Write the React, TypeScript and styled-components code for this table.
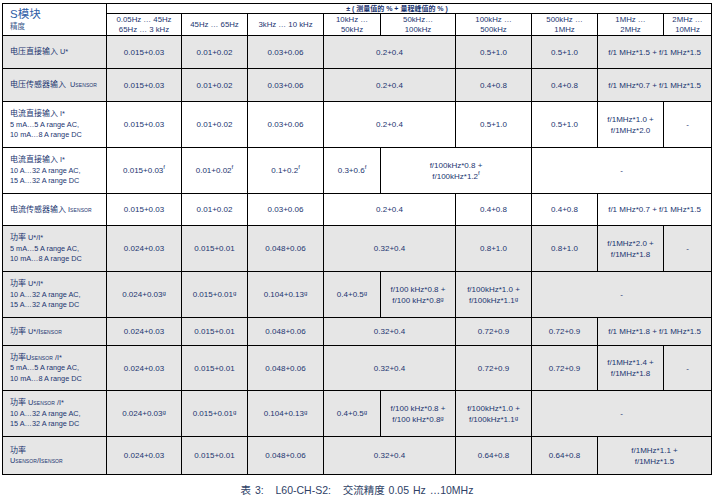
import React from "react";
import styled, { createGlobalStyle } from "styled-components";

const GlobalStyle = createGlobalStyle`
    body {
        margin: 0;
        background: #ffffff;
        font-family: "Liberation Sans", "Noto Sans CJK SC", sans-serif;
    }
`;

const ink = "#1b3570";

const Page = styled.div`
    width: 714px;
    padding: 3px 0 0 2px;
    box-sizing: border-box;
`;

const Table = styled.table`
    border-collapse: collapse;
    table-layout: fixed;
    width: 709px;
    color: ${ink};
    font-size: 8px;
    td {
        border: 1px solid #000;
        padding: 0 2px;
        text-align: center;
        vertical-align: middle;
        line-height: 11px;
        white-space: nowrap;
        overflow: hidden;
    }
`;

const Row = styled.tr<{ $h: number; $gray?: boolean }>`
    height: ${(p) => p.$h}px;
    background: ${(p) => (p.$gray ? "#e6e6e6" : "#ffffff")};
`;

const TitleCell = styled.td`
    && {
        text-align: left;
        padding-left: 7px;
        line-height: 12px;
    }
`;

const Title = styled.div`
    font-size: 11.5px;
    color: #2f5da6;
    font-family: "Liberation Sans", "Noto Sans CJK SC", sans-serif;
`;

const SubTitle = styled.div`
    font-size: 7.5px;
    color: #3b5a8c;
    font-family: "Noto Sans CJK SC", sans-serif;
`;

const RangeHead = styled.td`
    && {
        font-size: 7px;
        font-weight: bold;
        line-height: 9px;
        padding-right: 26px;
        font-family: "Liberation Sans", "Noto Sans CJK SC", sans-serif;
    }
`;

const ColHead = styled.td`
    && {
        font-size: 7.8px;
        line-height: 10px;
    }
`;

const LabelCell = styled.td`
    && {
        text-align: left;
        padding-left: 7px;
        font-size: 7.3px;
        line-height: 10.5px;
    }
`;

const Cn = styled.span`
    font-family: "Noto Sans CJK SC", sans-serif;
    font-size: 8px;
`;

const Sc = styled.span`
    font-size: 5px;
    letter-spacing: 0.1px;
`;

const Sup = styled.sup<{ $up: number }>`
    font-size: 6px;
    line-height: 0;
    vertical-align: ${(p) => p.$up}px;
`;

type Cell = { text: React.ReactNode; span?: number };
type RowData = { label: React.ReactNode; h: number; gray?: boolean; cells: Cell[] };

const cols = [104, 75, 66, 76, 57, 75, 76, 66, 66, 48];

const heads: string[][] = [
    ["0.05Hz … 45Hz", "65Hz … 3 kHz"],
    ["45Hz … 65Hz"],
    ["3kHz … 10 kHz"],
    ["10kHz …", "50kHz"],
    ["50kHz…", "100kHz"],
    ["100kHz …", "500kHz"],
    ["500kHz …", "1MHz"],
    ["1MHz …", "2MHz"],
    ["2MHz …", "10MHz"],
];

const sensor = (
    <>
        U<Sc>SENSOR</Sc>
    </>
);
const isensor = (
    <>
        I<Sc>SENSOR</Sc>
    </>
);

const f = <Sup $up={4}>f</Sup>;
const g = <Sup $up={2}>g</Sup>;

const two = (a: React.ReactNode, b: React.ReactNode) => (
    <>
        {a}
        <br />
        {b}
    </>
);

const lines = (head: React.ReactNode, ac: string, dc: string) => (
    <>
        {head}
        <br />
        {ac}
        <br />
        {dc}
    </>
);

const rowsData: RowData[] = [
    {
        label: <><Cn>电压直接输入</Cn> U*</>,
        h: 33,
        gray: true,
        cells: [
            { text: "0.015+0.03" },
            { text: "0.01+0.02" },
            { text: "0.03+0.06" },
            { text: "0.2+0.4", span: 2 },
            { text: "0.5+1.0" },
            { text: "0.5+1.0" },
            { text: "f/1 MHz*1.5 + f/1 MHz*1.5", span: 2 },
        ],
    },
    {
        label: <><Cn>电压传感器输入</Cn>&nbsp; {sensor}</>,
        h: 33,
        gray: true,
        cells: [
            { text: "0.015+0.03" },
            { text: "0.01+0.02" },
            { text: "0.03+0.06" },
            { text: "0.2+0.4", span: 2 },
            { text: "0.4+0.8" },
            { text: "0.4+0.8" },
            { text: "f/1 MHz*0.7 + f/1 MHz*1.5", span: 2 },
        ],
    },
    {
        label: lines(<><Cn>电流直接输入</Cn> I*</>, "5 mA…5 A range AC,", "10 mA…8 A range DC"),
        h: 46,
        cells: [
            { text: "0.015+0.03" },
            { text: "0.01+0.02" },
            { text: "0.03+0.06" },
            { text: "0.2+0.4", span: 2 },
            { text: "0.5+1.0" },
            { text: "0.5+1.0" },
            { text: two("f/1MHz*1.0 +", "f/1MHz*2.0") },
            { text: "-" },
        ],
    },
    {
        label: lines(<><Cn>电流直接输入</Cn> I*</>, "10 A…32 A range AC,", "15 A…32 A range DC"),
        h: 46,
        cells: [
            { text: <>0.015+0.03{f}</> },
            { text: <>0.01+0.02{f}</> },
            { text: <>0.1+0.2{f}</> },
            { text: <>0.3+0.6{f}</> },
            { text: two("f/100kHz*0.8 +", <>f/100kHz*1.2{f}</>), span: 2 },
            { text: "-", span: 3 },
        ],
    },
    {
        label: <><Cn>电流传感器输入</Cn> {isensor}</>,
        h: 32,
        cells: [
            { text: "0.015+0.03" },
            { text: "0.01+0.02" },
            { text: "0.03+0.06" },
            { text: "0.2+0.4", span: 2 },
            { text: "0.4+0.8" },
            { text: "0.4+0.8" },
            { text: "f/1 MHz*0.7 + f/1 MHz*1.5", span: 2 },
        ],
    },
    {
        label: lines(<><Cn>功率</Cn> U*/I*</>, "5 mA…5 A range AC,", "10 mA…8 A range DC"),
        h: 46,
        gray: true,
        cells: [
            { text: "0.024+0.03" },
            { text: "0.015+0.01" },
            { text: "0.048+0.06" },
            { text: "0.32+0.4", span: 2 },
            { text: "0.8+1.0" },
            { text: "0.8+1.0" },
            { text: two("f/1MHz*2.0 +", "f/1MHz*1.8") },
            { text: "-" },
        ],
    },
    {
        label: lines(<><Cn>功率</Cn> U*/I*</>, "10 A…32 A range AC,", "15 A…32 A range DC"),
        h: 46,
        gray: true,
        cells: [
            { text: <>0.024+0.03{g}</> },
            { text: <>0.015+0.01{g}</> },
            { text: <>0.104+0.13{g}</> },
            { text: <>0.4+0.5{g}</> },
            { text: two("f/100 kHz*0.8 +", <>f/100 kHz*0.8{g}</>) },
            { text: two("f/100kHz*1.0 +", <>f/100kHz*1.1{g}</>) },
            { text: "-", span: 3 },
        ],
    },
    {
        label: <><Cn>功率</Cn> U*/{isensor}</>,
        h: 28,
        gray: true,
        cells: [
            { text: "0.024+0.03" },
            { text: "0.015+0.01" },
            { text: "0.048+0.06" },
            { text: "0.32+0.4", span: 2 },
            { text: "0.72+0.9" },
            { text: "0.72+0.9" },
            { text: "f/1 MHz*1.8 + f/1 MHz*1.5", span: 2 },
        ],
    },
    {
        label: lines(<><Cn>功率</Cn>{sensor} /I*</>, "5 mA…5 A range AC,", "10 mA…8 A range DC"),
        h: 45,
        gray: true,
        cells: [
            { text: "0.024+0.03" },
            { text: "0.015+0.01" },
            { text: "0.048+0.06" },
            { text: "0.32+0.4", span: 2 },
            { text: "0.72+0.9" },
            { text: "0.72+0.9" },
            { text: two("f/1MHz*1.4 +", "f/1MHz*1.8") },
            { text: "-" },
        ],
    },
    {
        label: lines(<><Cn>功率</Cn> {sensor} /I*</>, "10 A…32 A range AC,", "15 A…32 A range DC"),
        h: 46,
        gray: true,
        cells: [
            { text: <>0.024+0.03{g}</> },
            { text: <>0.015+0.01{g}</> },
            { text: <>0.104+0.13{g}</> },
            { text: <>0.4+0.5{g}</> },
            { text: two("f/100 kHz*0.8 +", <>f/100 kHz*0.8{g}</>) },
            { text: two("f/100kHz*1.0 +", <>f/100kHz*1.1{g}</>) },
            { text: "-", span: 3 },
        ],
    },
    {
        label: (
            <>
                <Cn>功率</Cn>
                <br />
                {sensor}/{isensor}
            </>
        ),
        h: 38,
        gray: true,
        cells: [
            { text: "0.024+0.03" },
            { text: "0.015+0.01" },
            { text: "0.048+0.06" },
            { text: "0.32+0.4", span: 2 },
            { text: "0.64+0.8" },
            { text: "0.64+0.8" },
            { text: two("f/1MHz*1.1 +", "f/1MHz*1.5"), span: 2 },
        ],
    },
];

const Caption = styled.div`
    margin-top: 7px;
    padding-right: 2px;
    text-align: center;
    font-size: 10.5px;
    color: #2e4166;
    font-family: "Liberation Sans", "Noto Sans CJK SC", sans-serif;
    word-spacing: 1px;
`;

const CnCaption = styled.span`
    font-family: "Noto Sans CJK SC", sans-serif;
`;

export default function App() {
    return (
        <Page>
            <GlobalStyle />
            <Table>
                <colgroup>
                    {cols.map((w, i) => (
                        <col key={i} style={{ width: w }} />
                    ))}
                </colgroup>
                <tbody>
                    <Row $h={10}>
                        <TitleCell rowSpan={2}>
                            <Title>
                                S<CnCaption>模块</CnCaption>
                            </Title>
                            <SubTitle>精度</SubTitle>
                        </TitleCell>
                        <RangeHead colSpan={9}>
                            ± ( <CnCaption>测量值的</CnCaption> % + <CnCaption>量程峰值的</CnCaption> % )
                        </RangeHead>
                    </Row>
                    <Row $h={22}>
                        {heads.map((h, i) => (
                            <ColHead key={i}>
                                {h[0]}
                                {h[1] && (
                                    <>
                                        <br />
                                        {h[1]}
                                    </>
                                )}
                            </ColHead>
                        ))}
                    </Row>
                    {rowsData.map((r, i) => (
                        <Row key={i} $h={r.h} $gray={r.gray}>
                            <LabelCell>{r.label}</LabelCell>
                            {r.cells.map((c, j) => (
                                <td key={j} colSpan={c.span}>
                                    {c.text}
                                </td>
                            ))}
                        </Row>
                    ))}
                </tbody>
            </Table>
            <Caption>
                <CnCaption>表</CnCaption> 3:&nbsp;&nbsp; L60-CH-S2:&nbsp;&nbsp; <CnCaption>交流精度</CnCaption> 0.05 Hz …10MHz
            </Caption>
        </Page>
    );
}
